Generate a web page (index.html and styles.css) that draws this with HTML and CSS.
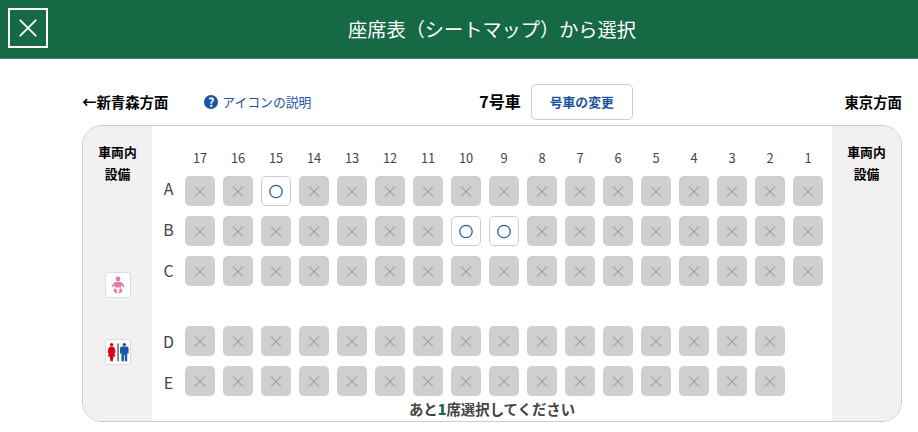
FILE: index.html
```
<!DOCTYPE html>
<html lang="ja">
<head>
  <meta charset="UTF-8" />
  <meta name="viewport" content="width=device-width, initial-scale=1" />
  <title>座席表(シートマップ)から選択</title>
  <link rel="stylesheet" href="styles.css">
</head>
<body>
  <header class="header">
    <button class="close" aria-label="閉じる">
      <svg width="18" height="18" viewBox="0 0 18 18"><path d="M1.3 1.3 16.7 16.7M16.7 1.3 1.3 16.7"/></svg>
    </button>
    <h1>座席表（シートマップ）から選択</h1>
  </header>
  <main class="wrap">
    <!-- Direction labels and car selection -->
    <div class="toolbar">
      <span class="direction">←新青森方面</span>
      <a class="help"><span class="help-mark">?</span>アイコンの説明</a>
      <span class="car-no">7号車</span>
      <button class="change">号車の変更</button>
      <span class="direction right">東京方面</span>
    </div>
    <!-- Car -->
    <section class="car">
      <div class="facility">
        <h2>車両内<br>設備</h2>
        <span class="icon baby">
          <svg width="24" height="24" viewBox="0 0 24 24" fill="#e07bae">
            <circle cx="12" cy="6" r="2.4"/>
            <path d="M9.6 8.900h4.800c1.800.6 3 2.100 4 4 .2.900-.9 1.400-1.500.7L15 12.300v2.300H9v-2.300l-1.900 1.300c-.6.700-1.700.2-1.500-.7 1-1.900 2.200-3.400 4-4z"/>
            <path d="M8.500 15.300l2.600.9-.9 1.700 1.100 1.200c.6 1-.6 1.900-1.400 1.200L7.300 17.900zM15.500 15.300l-2.600.9.9 1.700-1.100 1.200c-.6 1 .6 1.900 1.400 1.200l2.600-2.400z"/>
          </svg>
        </span>
        <span class="icon toilet">
          <svg width="24" height="24" viewBox="0 0 24 24">
            <g fill="#d7001d">
              <circle cx="5.600" cy="4.600" r="1.700"/>
              <path d="M3.900 6.500h3.400l1.700 2.300.5 4.200H8.400l1 3.500H7.500L6.800 21.300H4.400l-.7-4.800H1.800l1-3.500H1.700l.5-4.200z"/>
            </g>
            <path d="M11.500 3.500h1.100v17.800h-1.100z" fill="#333"/>
            <g fill="#1659a8">
              <circle cx="18.300" cy="4.600" r="1.700"/>
              <path d="M15.400 6.500h5.800l1.400 1.300v5.600H21.200v7.900h-2.500v-6.300h-.8v6.300h-2.500v-7.900H14V7.800z"/>
            </g>
          </svg>
        </span>
      </div>
      <div class="cabin">
        <div class="numbers" id="numbers"></div>
        <div class="plan">
          <div class="labels">
            <span>A</span><span>B</span><span>C</span><span class="aisle">D</span><span>E</span>
          </div>
          <div class="seats" id="seats"></div>
        </div>
        <p class="message">あと<b>1</b>席選択してください</p>
      </div>
      <div class="facility">
        <h2>車両内<br>設備</h2>
      </div>
    </section>
  </main>
  <script src="script.js"></script>
</body>
</html>
```
FILE: styles.css
```
* { box-sizing: border-box; }
body {
  margin: 0;
  font-family: "Noto Sans CJK JP", sans-serif;
  background: #fff;
  color: #000;
}
button { font-family: inherit; padding: 0; cursor: pointer; }
/* Header */
.header {
  display: flex;
  align-items: flex-start;
  height: 59px;
  padding: 8px;
  background: #156a45;
  border-bottom: 1px solid #3f8466;
}
.header h1 {
  flex: 1;
  margin: 0 0 0 26px;
  font-size: 19.2px;
  font-weight: 400;
  line-height: 42px;
  text-align: center;
  color: #fff;
}
.close {
  display: flex;
  align-items: center;
  justify-content: center;
  width: 40px;
  height: 40px;
  background: none;
  border: 2px solid #fff;
}
.close svg { fill: none; stroke: #fff; stroke-width: 1.8; stroke-linecap: round; }
.wrap { width: 820px; margin: 25px 0 0 82px; }
/* Toolbar */
.toolbar { display: flex; align-items: center; height: 36px; margin-bottom: 5px; }
.direction, .car-no, .help { padding-bottom: 2px; }
.direction { font-size: 14.4px; font-weight: 700; }
.direction.right { margin-left: auto; }
.help {
  display: flex;
  align-items: center;
  margin-left: 36px;
  font-size: 12.8px;
  color: #1c559f;
}
.help-mark {
  width: 14px;
  height: 14px;
  margin: 2px 4px 0 0;
  border-radius: 50%;
  background: #1c559f;
  color: #fff;
  font-size: 12px;
  font-weight: 700;
  line-height: 13px;
  text-align: center;
}
.car-no { margin-left: 168px; font-size: 16px; font-weight: 700; }
.change {
  width: 102px;
  height: 36px;
  margin-left: 10px;
  padding-bottom: 2px;
  border: 1px solid #ccc;
  border-radius: 5px;
  background: #fff;
  color: #1c559f;
  font-size: 12.8px;
  font-weight: 700;
}
/* Car */
.car {
  display: flex;
  height: 297px;
  border: 1px solid #ccc;
  border-radius: 20px;
  overflow: hidden;
}
.facility {
  display: flex;
  flex-direction: column;
  align-items: center;
  width: 69px;
  background: #f1f1f1;
}
.facility h2 { margin: 15px 0 0; font-size: 12.8px; line-height: 22px; text-align: center; }
.icon {
  width: 26px;
  height: 26px;
  border: 1px solid #ddd;
  border-radius: 3px;
  background: #fff;
}
.icon svg { display: block; }
.baby { margin-top: 87px; }
.toilet { margin-top: 41px; }
.cabin { width: 680px; padding-top: 22px; color: #444; }
.numbers { display: flex; gap: 8px; height: 20px; padding-left: 33px; }
.numbers span { width: 30px; font-size: 12.8px; line-height: 20px; text-align: center; }
.plan { display: flex; height: 220px; margin-top: 8.4px; }
.labels { width: 33px; margin-top: -8.4px; font-size: 16px; line-height: 41px; text-align: center; }
.labels span { display: block; }
.labels .aisle { margin-top: 30px; }
.seats { display: flex; flex-direction: column; gap: 10px; }
.row { display: flex; gap: 8px; }
.row.aisle { margin-top: 30px; }
.seat {
  display: flex;
  align-items: center;
  justify-content: center;
  width: 30px;
  height: 30px;
  border-radius: 5px;
  background: #cfcfcf;
}
.seat svg { fill: none; stroke: #8e8e8e; }
.seat.open { background: #fff; border: 1px solid #ccc; }
.seat.open svg { stroke: #295e9f; stroke-width: 1.3; }
.message {
  margin: 1.6px 0 0;
  font-size: 14.4px;
  font-weight: 700;
  line-height: 22px;
  text-align: center;
}
.message b { color: #156a45; }
```
FILE: script.js
```
const COLUMNS = 17;
const openSeats = ['15A', '10B', '9B'];

const cross = '<svg width="16" height="16" viewBox="0 0 16 16"><path d="M3 3.500 13 13.500M13 3.500 3 13.500"/></svg>';
const circle = '<svg width="16" height="16" viewBox="0 0 16 16"><circle cx="8" cy="8.500" r="6.2"/></svg>';

let numbers = '';
for (let n = COLUMNS; n > 0; n--) {
  numbers += `<span>${n}</span>`;
}
document.getElementById('numbers').innerHTML = numbers;

document.getElementById('seats').innerHTML = ['A', 'B', 'C', 'D', 'E'].map(row => {
  // no seats 1D and 1E in this car
  const last = row === 'D' || row === 'E' ? 2 : 1;
  let seats = '';
  for (let n = COLUMNS; n >= last; n--) {
    const open = openSeats.includes(n + row);
    seats += `<div class="seat${open ? ' open' : ''}">${open ? circle : cross}</div>`;
  }
  return `<div class="row${row === 'D' ? ' aisle' : ''}">${seats}</div>`;
}).join('');
```
